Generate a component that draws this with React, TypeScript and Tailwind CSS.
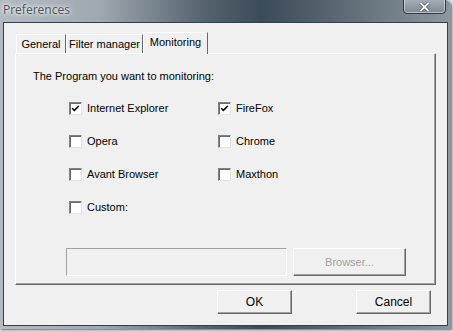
import { Check } from "lucide-react";

const sans = { fontFamily: '"Liberation Sans", Arial, sans-serif' };

function CheckBox({ label, checked }: { label: string; checked?: boolean }) {
    return (
        <label className="flex h-[13px] items-center gap-[5px] text-[11px] text-black">
            <span className="flex h-[13px] w-[13px] shrink-0 items-center justify-center border border-t-[#808080] border-l-[#808080] border-r-[#e3e3e3] border-b-[#e3e3e3] bg-white shadow-[inset_1px_1px_0_#6a6a6a]">
                {checked && <Check className="h-[9px] w-[9px] text-black" strokeWidth={4} />}
            </span>
            <span className="whitespace-nowrap">{label}</span>
        </label>
    );
}

function ClassicButton({ children, disabled, className }: { children: string; disabled?: boolean; className?: string }) {
    return (
        <button
            className={`flex items-center justify-center border border-t-white border-l-white border-r-[#696969] border-b-[#696969] bg-[#f0f0f0] text-[11px] shadow-[inset_-1px_-1px_0_#a0a0a0] ${disabled ? "text-[#a0a0a0]" : "text-black"} ${className ?? ""}`}
        >
            {children}
        </button>
    );
}

export default function App() {
    return (
        <div className="h-[332px] w-[453px] overflow-hidden bg-[#d8dadc]" style={sans}>
            <div className="flex h-[329px] w-[451px] flex-col rounded-tr-[6px] bg-[linear-gradient(90deg,#b4bbc2_0%,#9ea8b1_22%,#56646f_45%,#3c4b58_58%,#56636e_72%,#8c979f_100%)] shadow-[1px_1px_2px_rgba(0,0,0,0.45)]">
                <div className="relative flex h-[22px] items-start pl-[3px] pt-[1px]">
                    <span
                        className="text-[12px] text-[#4a535b] [text-shadow:0_0_6px_#ffffff,0_0_3px_#ffffff]"
                        style={{ fontFamily: '"Open Sans", "Noto Sans", sans-serif' }}
                    >
                        Preferences
                    </span>
                    <div className="absolute right-[5px] top-[-3px] flex h-[17px] w-[43px] items-end justify-center rounded-b-[4px] border border-[#2f3a44] bg-[linear-gradient(180deg,#a9b3bb,#7e8a94)] pb-[1px] shadow-[inset_0_0_0_1px_rgba(255,255,255,0.45)]">
                        <svg width="11" height="10" viewBox="0 0 11 10">
                            <path d="M1.5 1 L9.5 9 M9.5 1 L1.5 9" stroke="#38424b" strokeWidth="3.2" />
                            <path d="M1.5 1 L9.5 9 M9.5 1 L1.5 9" stroke="#ffffff" strokeWidth="1.8" />
                        </svg>
                    </div>
                </div>
                <div className="mx-[3px] mb-[3px] flex flex-1 flex-col border border-[#34414c] bg-[#f0f0f0] px-[11px] pt-[9px]">
                    <div className="flex h-[21px] items-end pl-[1px]">
                        <div className="flex h-[19px] w-[50px] items-center justify-center border-l border-t border-r border-l-white border-t-white border-r-[#696969] text-[11px]">
                            General
                        </div>
                        <div className="flex h-[19px] w-[77px] items-center justify-center border-l border-t border-r border-l-white border-t-white border-r-[#696969] text-[11px]">
                            Filter manager
                        </div>
                        <div className="relative z-10 -mb-px flex h-[22px] w-[65px] items-center justify-center border-l border-t border-r border-l-white border-t-white border-r-[#696969] bg-[#f0f0f0] pb-[2px] text-[11px]">
                            Monitoring
                        </div>
                    </div>
                    <div className="flex h-[232px] flex-col border border-t-white border-l-white border-r-[#696969] border-b-[#696969] shadow-[inset_-1px_-1px_0_#a0a0a0] pl-[17px] pt-[16px] text-[11px]">
                        <p className="leading-[13px]">The Program you want to monitoring:</p>
                        <div className="mt-[19px] grid w-[240px] grid-cols-[149px_1fr] gap-y-[20px] pl-[36px]">
                            <CheckBox label="Internet Explorer" checked />
                            <CheckBox label="FireFox" checked />
                            <CheckBox label="Opera" />
                            <CheckBox label="Chrome" />
                            <CheckBox label="Avant Browser" />
                            <CheckBox label="Maxthon" />
                            <CheckBox label="Custom:" />
                        </div>
                        <div className="mt-[34px] flex gap-[6px] pl-[33px]">
                            <div className="h-[28px] w-[221px] border border-t-[#a0a0a0] border-l-[#a0a0a0] border-r-white border-b-white bg-[#f0f0f0]" />
                            <ClassicButton disabled className="h-[28px] w-[113px]">
                                Browser...
                            </ClassicButton>
                        </div>
                    </div>
                    <div className="mt-[5px] flex justify-end gap-[64px] pr-[5px]">
                        <ClassicButton className="h-[24px] w-[75px] text-[12px]">OK</ClassicButton>
                        <ClassicButton className="h-[24px] w-[75px] text-[12px]">Cancel</ClassicButton>
                    </div>
                </div>
            </div>
        </div>
    );
}
